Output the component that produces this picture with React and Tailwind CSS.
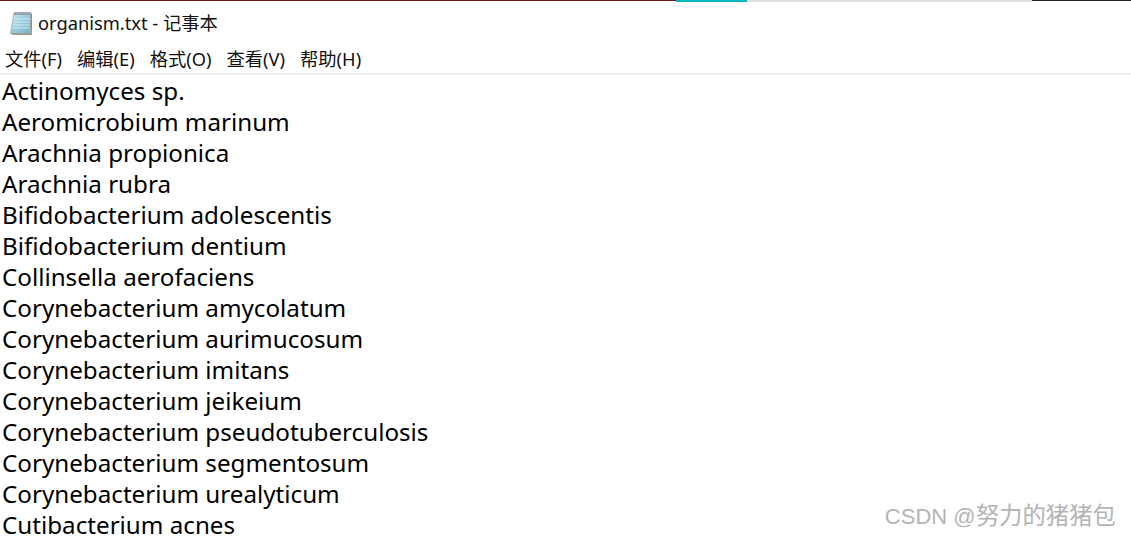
const lines = [
  'Actinomyces sp.',
  'Aeromicrobium marinum',
  'Arachnia propionica',
  'Arachnia rubra',
  'Bifidobacterium adolescentis',
  'Bifidobacterium dentium',
  'Collinsella aerofaciens',
  'Corynebacterium amycolatum',
  'Corynebacterium aurimucosum',
  'Corynebacterium imitans',
  'Corynebacterium jeikeium',
  'Corynebacterium pseudotuberculosis',
  'Corynebacterium segmentosum',
  'Corynebacterium urealyticum',
  'Cutibacterium acnes',
];

const menus = ['文件(F)', '编辑(E)', '格式(O)', '查看(V)', '帮助(H)'];

function NotepadIcon() {
  return (
    <svg width="24" height="25" viewBox="0 0 24 25">
      <defs>
        <linearGradient id="page" x1="0" y1="0" x2="1" y2="1">
          <stop offset="0" stopColor="#c4e6ee" />
          <stop offset="1" stopColor="#6fb4cc" />
        </linearGradient>
      </defs>
      <path d="M5 3h17l-1 20.5H1.5z" fill="url(#page)" stroke="#8a9aa0" strokeWidth="0.7" />
      <path d="M22.3 3.5v20.7H3" fill="none" stroke="#8c8270" strokeWidth="1.2" />
      <path d="M5 2h17v3H4.6z" fill="#8f9ea6" />
      <path d="M5 2.6h17M5 3.8h17" stroke="#c9d2d6" strokeWidth="0.6" strokeDasharray="1 1" />
      <path d="M4.5 9h17M4 12h17M3.6 15h17M3.2 18h17" stroke="#dff1f5" strokeWidth="0.8" />
    </svg>
  );
}

export default function App() {
  return (
    <div className="relative h-[537px] w-[1131px] overflow-hidden bg-white font-['Noto_Sans','Noto_Sans_CJK_SC',sans-serif] text-black">
      <div className="flex h-[2px] items-start">
        <div className="h-px w-[676px] bg-[#6b1a1a]" />
        <div className="h-[2px] w-[71px] bg-[#0bb5c0]" />
        <div className="h-[2px] w-[285px] bg-[#e1e1e1]" />
        <div className="h-px flex-1 bg-[#222222]" />
      </div>

      <div className="flex h-[41px] items-center pl-[9px]">
        <NotepadIcon />
        <span className="ml-[5px] text-[18.3px] text-[#111111]">organism.txt - 记事本</span>
      </div>

      <div className="flex h-[32px] items-center gap-[15px] border-b-2 border-[#f0f0f0] pt-[2px] pl-[5px] text-[18.3px] text-[#111111]">
        {menus.map(m => (
          <span key={m}>{m}</span>
        ))}
      </div>

      <div className="pl-[2px] text-[24.2px] leading-[31px]">
        {lines.map(l => (
          <div key={l} className="whitespace-nowrap">{l}</div>
        ))}
      </div>

      <div className="absolute top-[501px] right-[15px] font-['Liberation_Sans','Noto_Sans_CJK_SC',sans-serif] text-[22px] leading-[30px] text-[#b4b4b4]">
        CSDN @<span className="text-[23.4px]">努力的猪猪包</span>
      </div>
    </div>
  );
}
